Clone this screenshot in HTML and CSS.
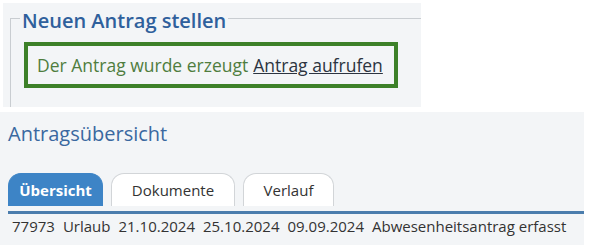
FILE: index.html
```html
<!DOCTYPE html>
<html lang="de">
<head>
  <meta charset="UTF-8">
  <meta name="viewport" content="width=device-width, initial-scale=1.0">
  <title>Antrag</title>
  <link rel="stylesheet" href="styles.css">
</head>
<body>

  <div class="new-request">
    <fieldset class="request-box">
      <legend>Neuen Antrag stellen</legend>
      <div class="success">
        Der Antrag wurde erzeugt <a href="#">Antrag aufrufen</a>
      </div>
    </fieldset>
  </div>

  <div class="overview">
    <h2>Antragsübersicht</h2>

    <div class="tabs">
      <span class="tab active">Übersicht</span>
      <span class="tab">Dokumente</span>
      <span class="tab">Verlauf</span>
    </div>

    <table class="request-table">
      <tr>
        <td>77973</td>
        <td>Urlaub</td>
        <td>21.10.2024</td>
        <td>25.10.2024</td>
        <td>09.09.2024</td>
        <td>Abwesenheitsantrag erfasst</td>
      </tr>
    </table>
  </div>

</body>
</html>
```

FILE: styles.css
```css
body {
  font-family: 'Open Sans', sans-serif;
  background-color: #fff;
  color: #333;
  margin: 0;
  padding: 0;
}

.new-request {
  width: 418px;
  height: 104px;
  margin: 3px 0 0 3px;
  background-color: #f3f5f7;
  box-sizing: border-box;
  padding: 0 0 0 7px;
}

.request-box {
  margin: 0;
  padding: 8px 0 0 0;
  height: 100%;
  box-sizing: border-box;
  border: none;
  border-top: 1px solid #c9cdd1;
  border-left: 1px solid #c9cdd1;
}

.request-box legend {
  margin-left: 9px;
  padding: 4px 2px 0;
  font-size: 20px;
  font-weight: 600;
  color: #2f609c;
}

.success {
  margin-left: 13px;
  width: 374px;
  height: 46px;
  box-sizing: border-box;
  border: 4px solid #3d8129;
  padding: 0 9px;
  display: flex;
  align-items: center;
  gap: 5px;
  font-size: 17.5px;
  color: #4f7d3e;
}

.success a {
  color: #2c3440;
  text-decoration: underline;
}

.overview {
  margin-top: 5px;
  width: 584px;
  height: 133px;
  background-color: #f3f5f7;
  padding: 8px 0 0 8px;
  box-sizing: border-box;
}

.overview h2 {
  margin: 0;
  font-size: 20px;
  font-weight: 400;
  color: #3a68a0;
}

.tabs {
  margin-top: 26px;
  display: flex;
  gap: 8px;
  border-bottom: 3px solid #4b7dad;
  padding-bottom: 5px;
}

.tab {
  height: 33px;
  box-sizing: border-box;
  display: flex;
  align-items: center;
  justify-content: center;
  font-size: 15px;
  color: #333;
  background-color: #fff;
  border: 1px solid #d2d5d8;
  border-bottom: none;
  border-radius: 13px 13px 0 0;
}

.tab:nth-child(1) { width: 95px; }
.tab:nth-child(2) { width: 124px; }
.tab:nth-child(3) { width: 91px; }

.tab.active {
  background-color: #3d84c6;
  border-color: #3d84c6;
  color: #fff;
  font-weight: 700;
}

.request-table {
  border-collapse: collapse;
  font-size: 15px;
  color: #333;
}

.request-table td {
  padding: 2px 4px 0;
}
```
